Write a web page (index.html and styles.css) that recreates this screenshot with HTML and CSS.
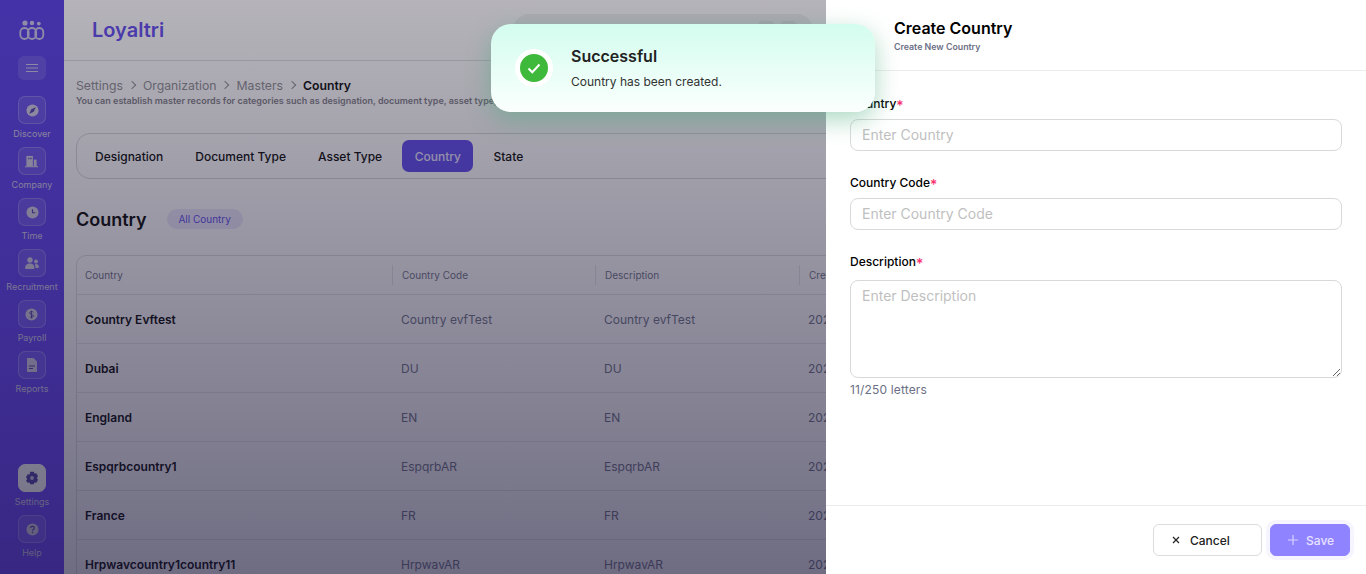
FILE: index.html
```html
<!DOCTYPE html>
<html lang="en">
  <head>
    <meta charset="UTF-8" />
    <meta name="viewport" content="width=device-width, initial-scale=1.0" />
    <title>Loyaltri - Country</title>
    <link rel="stylesheet" href="styles.css">
  </head>
  <body>
    <div class="app">
      <aside class="sidebar">
        <svg class="logo" width="26" height="20" viewBox="0 0 26 20" fill="none">
          <circle cx="6" cy="3" r="2.6" fill="#c9c4e6" />
          <circle cx="13" cy="3" r="2.2" fill="#c9c4e6" />
          <circle cx="19.8" cy="3.6" r="1.9" fill="#c9c4e6" />
          <rect x="1.3" y="8" width="8.4" height="11" rx="4.2" stroke="#c9c4e6" stroke-width="1.8" />
          <rect x="8.8" y="8" width="8.4" height="11" rx="4.2" stroke="#c9c4e6" stroke-width="1.8" />
          <rect x="16.3" y="8" width="8" height="11" rx="4" stroke="#c9c4e6" stroke-width="1.8" />
        </svg>
        <div class="menu-btn">
          <svg width="12" height="8" viewBox="0 0 12 8" stroke="#c9c4e6" stroke-width="1"><path d="M0 .5h12M0 4h12M0 7.500h12" /></svg>
        </div>

        <a class="nav-item">
          <span class="nav-tile">
            <svg width="13" height="13" viewBox="0 0 14 14"><circle cx="7" cy="7" r="6.500" fill="#d0cce4" /><path d="M10.500 3.500 8.300 8.300 3.500 10.500 5.700 5.700z" fill="#4a3aa8" /></svg>
          </span>
          Discover
        </a>
        <a class="nav-item">
          <span class="nav-tile">
            <svg width="13" height="13" viewBox="0 0 14 14" fill="#d0cce4"><path d="M1.500 1h7v11h-7z" /><path d="M9.500 5h3v7h-3z" /><path d="M0 12h14v1.200H0z" /><path d="M3.500 3h1.300v1.500H3.500zM5.800 3h1.300v1.500H5.800z" fill="#4a3aa8" /></svg>
          </span>
          Company
        </a>
        <a class="nav-item">
          <span class="nav-tile">
            <svg width="13" height="13" viewBox="0 0 14 14"><circle cx="7" cy="7" r="6.500" fill="#d0cce4" /><path d="M7 3.500V7.300h3" fill="none" stroke="#4a3aa8" stroke-width="1.200" /></svg>
          </span>
          Time
        </a>
        <a class="nav-item">
          <span class="nav-tile">
            <svg width="14" height="13" viewBox="0 0 14 13" fill="#d0cce4"><circle cx="5" cy="3" r="2.700" /><circle cx="11" cy="4.500" r="1.900" /><path d="M0 11.500C0 8 2 6.500 5 6.500s4.500 1.500 4.500 5c0 .8-9.500.8-9.500 0z" /><path d="M10 7c2.500-.5 4 1 4 3.300 0 .7-2.200.8-3.500.7 0-1.500-.1-2.800-.5-4z" /></svg>
          </span>
          Recruitment
        </a>
        <a class="nav-item">
          <span class="nav-tile">
            <svg width="13" height="13" viewBox="0 0 14 14"><circle cx="7" cy="7" r="6.500" fill="#d0cce4" /><path d="M9 4.800C8.500 4 7.800 3.800 7 3.800c-1.200 0-2 .6-2 1.500C5 7.500 9 6.500 9 8.700c0 .9-.9 1.500-2 1.500-.9 0-1.600-.3-2-1M7 2.800v8.400" fill="none" stroke="#4a3aa8" stroke-width="1" /></svg>
          </span>
          Payroll
        </a>
        <a class="nav-item">
          <span class="nav-tile">
            <svg width="12" height="14" viewBox="0 0 12 14"><path d="M1 0h6.500L11 3.500V14H1z" fill="#d0cce4" /><path d="M3 8h6M3 10.500h4" stroke="#4a3aa8" stroke-width="1.100" /></svg>
          </span>
          Reports
        </a>

        <div class="nav-bottom">
          <a class="nav-item active">
            <span class="nav-tile">
              <svg width="14" height="14" viewBox="0 0 14 14"><path d="M5.200.8h3.600l.6 1.800 1.900-.3 1.700 2.900-1.200 1.800 1.200 1.800-1.700 2.900-1.900-.3-.6 1.800H5.200l-.6-1.800-1.900.3L1 9.800 2.200 8 1 6.200l1.700-2.900 1.900.3z" fill="#4a3aa8" /><circle cx="7" cy="7" r="1.900" fill="#d0cce4" /></svg>
            </span>
            Settings
          </a>
          <a class="nav-item">
            <span class="nav-tile">
              <svg width="13" height="13" viewBox="0 0 14 14"><circle cx="7" cy="7" r="6.500" fill="#d0cce4" /><path d="M5 5.400C5 4.300 5.900 3.600 7 3.600s2 .7 2 1.700C9 6.800 7 6.800 7 8.400" fill="none" stroke="#4a3aa8" stroke-width="1.200" /><circle cx="7" cy="10.200" r=".8" fill="#4a3aa8" /></svg>
            </span>
            Help
          </a>
        </div>
      </aside>

      <main class="main">
        <header class="topbar">
          <span class="brand">Loyaltri</span>
          <div class="search">
            <span class="search-key"></span>
            <span class="search-key"></span>
          </div>
        </header>

        <div class="content">
          <div class="crumbs">
            <span>Settings</span><i class="sep"></i>
            <span>Organization</span><i class="sep"></i>
            <span>Masters</span><i class="sep"></i>
            <b>Country</b>
          </div>
          <p class="crumbs-note">You can establish master records for categories such as designation, document type, asset type, country and state within the organization.</p>

          <nav class="tabs">
            <a class="tab">Designation</a>
            <a class="tab">Document Type</a>
            <a class="tab">Asset Type</a>
            <a class="tab active">Country</a>
            <a class="tab">State</a>
          </nav>

          <div class="section-head">
            <h2>Country</h2>
            <span class="chip">All Country</span>
          </div>

          <div class="table">
            <div class="row head">
              <div>Country</div><div>Country Code</div><div>Description</div><div>Created On</div>
            </div>
            <div class="row"><div>Country Evftest</div><div>Country evfTest</div><div>Country evfTest</div><div>2024</div></div>
            <div class="row"><div>Dubai</div><div>DU</div><div>DU</div><div>2024</div></div>
            <div class="row"><div>England</div><div>EN</div><div>EN</div><div>2024</div></div>
            <div class="row"><div>Espqrbcountry1</div><div>EspqrbAR</div><div>EspqrbAR</div><div>2024</div></div>
            <div class="row"><div>France</div><div>FR</div><div>FR</div><div>2024</div></div>
            <div class="row"><div>Hrpwavcountry1country11</div><div>HrpwavAR</div><div>HrpwavAR</div><div>2024</div></div>
          </div>
        </div>
      </main>
    </div>

    <div class="overlay"></div>

    <section class="drawer">
      <div class="drawer-head">
        <h3>Create Country</h3>
        <small>Create New Country</small>
      </div>
      <form class="drawer-form">
        <div class="field">
          <label>Country<em>*</em></label>
          <input type="text" placeholder="Enter Country" />
        </div>
        <div class="field">
          <label>Country Code<em>*</em></label>
          <input type="text" placeholder="Enter Country Code" />
        </div>
        <div class="field">
          <label>Description<em>*</em></label>
          <textarea placeholder="Enter Description"></textarea>
          <span class="counter">11/250 letters</span>
        </div>
      </form>
      <div class="drawer-foot">
        <button class="btn">
          <svg width="8" height="8" viewBox="0 0 8 8" stroke="#222" stroke-width="1.200"><path d="M1 1l6 6M7 1 1 7" /></svg>
          Cancel
        </button>
        <button class="btn primary">
          <svg width="10" height="10" viewBox="0 0 10 10" stroke="#d9d2ff" stroke-width="1.200"><path d="M5 0v10M0 5h10" /></svg>
          Save
        </button>
      </div>
    </section>

    <div class="toast">
      <span class="toast-icon">
        <svg width="14" height="11" viewBox="0 0 14 11" fill="none" stroke="#fff" stroke-width="2"><path d="M1.500 5.500 5.300 9.300 12.500 1.500" /></svg>
      </span>
      <div class="toast-text">
        <h4>Successful</h4>
        <p>Country has been created.</p>
      </div>
    </div>
  </body>
</html>
```

FILE: styles.css
```css
* {
  box-sizing: border-box;
}
html,
body {
  height: 100%;
}
body {
  margin: 0;
  overflow: hidden;
  font-family: Inter, "Liberation Sans", sans-serif;
  background: #fff;
  color: #000;
}
.app {
  display: flex;
  height: 574px;
}

/* sidebar */
.sidebar {
  width: 64px;
  flex-shrink: 0;
  display: flex;
  flex-direction: column;
  align-items: center;
  padding: 20px 0 8px;
  background: linear-gradient(180deg, #4e36e4, #6640ff);
}
.logo {
  margin-bottom: 16px;
}
.menu-btn {
  width: 28px;
  height: 24px;
  margin-bottom: 16px;
  display: flex;
  align-items: center;
  justify-content: center;
  border-radius: 6px;
  background: rgba(255, 255, 255, 0.12);
}
.nav-item {
  height: 51px;
  display: flex;
  flex-direction: column;
  align-items: center;
  gap: 4px;
  font-size: 9px;
  line-height: 12px;
  color: #cfcae8;
}
.nav-tile {
  width: 28px;
  height: 28px;
  flex-shrink: 0;
  display: flex;
  align-items: center;
  justify-content: center;
  border: 1px solid rgba(255, 255, 255, 0.22);
  border-radius: 7px;
  background: rgba(255, 255, 255, 0.1);
}
.nav-item.active .nav-tile {
  border-color: #fff;
  background: #fff;
}
.nav-bottom {
  margin-top: auto;
}

/* main area */
.main {
  flex: 1;
  min-width: 0;
}
.topbar {
  height: 61px;
  padding: 0 0 0 28px;
  display: flex;
  align-items: center;
  border-bottom: 1px solid #dcdcdc;
}
.brand {
  font-size: 20px;
  font-weight: 600;
  color: #5a44ee;
}
.search {
  width: 300px;
  height: 32px;
  margin-left: 349px;
  margin-top: -1px;
  padding-right: 16px;
  display: flex;
  justify-content: flex-end;
  align-items: center;
  gap: 5px;
  border-radius: 16px;
  background: #f0f0f2;
}
.search-key {
  width: 17px;
  height: 17px;
  border-radius: 5px;
  background: #e2e2e5;
}
.content {
  padding: 16px 0 0 12px;
}
.crumbs {
  display: flex;
  align-items: center;
  height: 16px;
  font-size: 12.25px;
  color: #8b8a90;
}
.crumbs b {
  font-weight: 600;
  color: #000;
}
.sep {
  width: 6px;
  height: 6px;
  margin: 0 8px 0 6px;
  border-top: 1px solid #8b8a90;
  border-right: 1px solid #8b8a90;
  transform: rotate(45deg);
}
.crumbs-note {
  margin: 1px 0 0;
  height: 14px;
  font-size: 9px;
  line-height: 14px;
  font-weight: 600;
  color: #7c7b84;
  white-space: nowrap;
}
.tabs {
  width: 900px;
  height: 46px;
  margin-top: 25px;
  padding: 0 6px;
  display: flex;
  align-items: center;
  border: 1px solid #d6d6d8;
  border-radius: 14px;
}
.tab {
  padding: 0 12px;
  height: 32px;
  display: flex;
  align-items: center;
  margin-right: 8px;
  font-size: 12px;
  font-weight: 500;
  border-radius: 7px;
}
.tab.active {
  padding: 0 12.5px;
  background: #5a44ee;
  color: #e4e0ff;
}
.section-head {
  height: 22px;
  margin-top: 29px;
  display: flex;
  align-items: center;
  gap: 20px;
}
.section-head h2 {
  margin: 0;
  font-size: 18px;
  font-weight: 600;
}
.chip {
  width: 76px;
  height: 20px;
  display: flex;
  align-items: center;
  justify-content: center;
  border-radius: 10px;
  font-size: 10px;
  color: #5a44ee;
  background: rgba(90, 68, 238, 0.12);
}
.table {
  width: 900px;
  margin-top: 25px;
  border: 1px solid #dedee2;
  border-radius: 10px 10px 0 0;
}
.row {
  display: grid;
  grid-template-columns: 315px 203px 204px 1fr;
  height: 49px;
  align-items: center;
  border-bottom: 1px solid #e6e6ea;
  font-size: 12px;
  color: #6c7086;
}
.row > div {
  padding-left: 9px;
  white-space: nowrap;
}
.row > div:first-child {
  padding-left: 8px;
  font-weight: 600;
  color: #000;
}
.row.head {
  height: 39px;
  font-size: 10px;
}
.row.head > div {
  height: 20px;
  line-height: 20px;
  border-left: 1px solid #e6e6ea;
}
.row.head > div:first-child {
  border-left: 0;
  font-weight: 400;
  color: #6c7086;
}

/* dim layer under the drawer */
.overlay {
  position: absolute;
  inset: 0;
  background: linear-gradient(180deg, rgba(50, 46, 62, 0.36), rgba(30, 26, 60, 0.64));
}

/* drawer */
.drawer {
  position: absolute;
  top: 0;
  right: 0;
  bottom: 0;
  width: 540px;
  display: flex;
  flex-direction: column;
  background: #fff;
}
.drawer-head {
  height: 71px;
  padding: 18px 0 0 68px;
  border-bottom: 1px solid #ececec;
}
.drawer-head h3 {
  margin: 0;
  font-size: 16px;
  line-height: 20px;
  font-weight: 600;
}
.drawer-head small {
  display: block;
  margin-top: 1px;
  font-size: 8.8px;
  line-height: 16px;
  font-weight: 600;
  color: #6c7086;
}
.drawer-form {
  flex: 1;
  padding: 24px 24px 0;
}
.field {
  margin-bottom: 24px;
}
.field label {
  display: block;
  height: 16px;
  margin: 1px 0 7px;
  font-size: 12px;
  line-height: 16px;
  font-weight: 500;
}
.field label em {
  font-size: 14px;
  line-height: 10px;
  vertical-align: -3px;
  font-style: normal;
  color: #f5316f;
}
.field input,
.field textarea {
  display: block;
  width: 100%;
  padding: 0 11px 2px;
  border: 1px solid #d9d9d9;
  border-radius: 8px;
  font-family: inherit;
  font-size: 14px;
  outline: none;
}
.field input {
  height: 32px;
}
.field textarea {
  height: 98px;
  margin-top: 10px;
  padding-top: 6px;
}
input::placeholder,
textarea::placeholder {
  color: #bfbfbf;
}
.counter {
  display: block;
  margin-top: 4px;
  font-size: 12px;
  line-height: 16px;
  letter-spacing: 0.15px;
  color: #6c7086;
}
.drawer-foot {
  height: 69px;
  padding: 18px 16px 0 0;
  display: flex;
  justify-content: flex-end;
  gap: 8px;
  border-top: 1px solid #ececec;
}
.btn {
  height: 32px;
  display: flex;
  align-items: center;
  font-family: inherit;
  font-size: 12px;
  font-weight: 500;
  border-radius: 6px;
  border: 1px solid #dcdcdc;
  background: #fff;
  color: #222;
  width: 109px;
  padding-left: 18px;
  gap: 10px;
}
.btn.primary {
  width: 80px;
  padding-left: 17px;
  gap: 8px;
  border-color: #9083ff;
  background: #9083ff;
  color: #e8e4ff;
  box-shadow: 0 0 0 4px #f6f5ff;
}

/* toast */
.toast {
  position: absolute;
  top: 24px;
  left: 491px;
  width: 384px;
  height: 88px;
  padding: 0 0 0 24px;
  display: flex;
  align-items: center;
  gap: 18px;
  border-radius: 20px;
  background: linear-gradient(180deg, #d3fdee, #fbfffe);
  box-shadow: 0 8px 24px rgba(70, 170, 125, 0.45);
}
.toast-icon {
  width: 38px;
  height: 38px;
  display: flex;
  align-items: center;
  justify-content: center;
  flex-shrink: 0;
  border: 5px solid #fff;
  border-radius: 50%;
  background: #3fb93b;
}
.toast-text {
  padding-bottom: 1px;
}
.toast h4 {
  margin: 0 0 8px;
  font-size: 16px;
  line-height: 20px;
  font-weight: 600;
  color: #222;
}
.toast p {
  margin: 0;
  font-size: 12px;
  line-height: 16px;
  color: #333;
}
```
